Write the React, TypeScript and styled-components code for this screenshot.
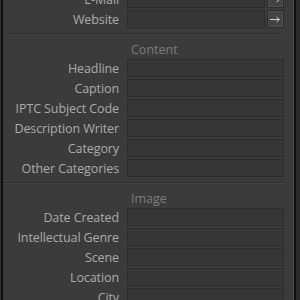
import styled, { createGlobalStyle } from 'styled-components'

const GlobalStyle = createGlobalStyle`
  html, body {
    margin: 0;
    padding: 0;
    background: #2b2b2b;
    overflow: hidden;
  }
  body {
    font-family: "Open Sans", "Liberation Sans", Arial, sans-serif;
  }
`

const Frame = styled.div`
  display: flex;
  height: 300px;
  width: 300px;
  overflow: hidden;
`

const LeftEdge = styled.div`
  width: 3px;
  flex: none;
  border-left: 1px solid #333;
  background: #0e0e0e;
  box-sizing: border-box;
`

const RightEdge = styled.div`
  width: 7px;
  flex: none;
  box-sizing: border-box;
  border-left: 1px solid #4a4a4a;
  background: linear-gradient(to right, #0e0e0e 0 2px, #2b2b2b 2px);
`

const Panel = styled.div`
  flex: 1;
  background: #3b3b3b;
  padding-right: 9px;
  margin-top: -10px;
  display: flex;
  flex-direction: column;
`

const Rows = styled.div`
  display: flex;
  flex-direction: column;
  gap: 2px;
  padding-bottom: 5px;
`

const Row = styled.div`
  display: grid;
  grid-template-columns: 116px 1fr;
  column-gap: 8px;
  align-items: start;
  height: 18px;
`

const Label = styled.div`
  text-align: right;
  color: #ababab;
  font-size: 12.5px;
  line-height: 16px;
  padding-top: 2px;
  white-space: nowrap;
  letter-spacing: -0.1px;
`

const FieldWrap = styled.div`
  display: flex;
  gap: 2px;
  height: 18px;
`

const Field = styled.div`
  flex: 1;
  box-sizing: border-box;
  height: 18px;
  background: #363636;
  border: 1px solid #2c2c2c;
  box-shadow: inset 0 -1px 0 #3a3a3a;
`

const ArrowButton = styled.div`
  width: 17px;
  height: 18px;
  box-sizing: border-box;
  flex: none;
  background: #434343;
  border: 1px solid #2c2c2c;
  box-shadow: inset 0 0 0 1px #505050;
  display: flex;
  align-items: center;
  justify-content: center;
`

const Section = styled.div`
  border-top: 1px solid #2e2e2e;
  box-shadow: inset 0 1px 0 #444;
`

const Heading = styled.div`
  padding: 8px 0 1px 128px;
  line-height: 16px;
  font-size: 12.5px;
  color: #7b7b7b;
`

function Arrow () {
  return (
    <svg width="11" height="7" viewBox="0 0 11 7">
      <path d="M0 3.5 H9" stroke="#d0d0d0" strokeWidth="1" />
      <path d="M6.5 1 L9.5 3.5 L6.5 6" stroke="#d0d0d0" strokeWidth="1" fill="none" />
    </svg>
  )
}

interface FieldRowProps {
  label: string
  link?: boolean
}

function FieldRow ({ label, link }: FieldRowProps) {
  return (
    <Row>
      <Label>{label}</Label>
      <FieldWrap>
        <Field />
        {link === true && (
          <ArrowButton>
            <Arrow />
          </ArrowButton>
        )}
      </FieldWrap>
    </Row>
  )
}

const content = ['Headline', 'Caption', 'IPTC Subject Code', 'Description Writer', 'Category', 'Other Categories']
const image = ['Date Created', 'Intellectual Genre', 'Scene', 'Location', 'City']

export default function App () {
  return (
    <>
      <GlobalStyle />
      <Frame>
        <LeftEdge />
        <Panel>
          <Rows>
            <FieldRow label="E-Mail" link />
            <FieldRow label="Website" link />
          </Rows>
          <Section>
            <Heading>Content</Heading>
            <Rows>
              {content.map((l) => <FieldRow key={l} label={l} />)}
            </Rows>
          </Section>
          <Section>
            <Heading>Image</Heading>
            <Rows>
              {image.map((l) => <FieldRow key={l} label={l} />)}
            </Rows>
          </Section>
        </Panel>
        <RightEdge />
      </Frame>
    </>
  )
}
